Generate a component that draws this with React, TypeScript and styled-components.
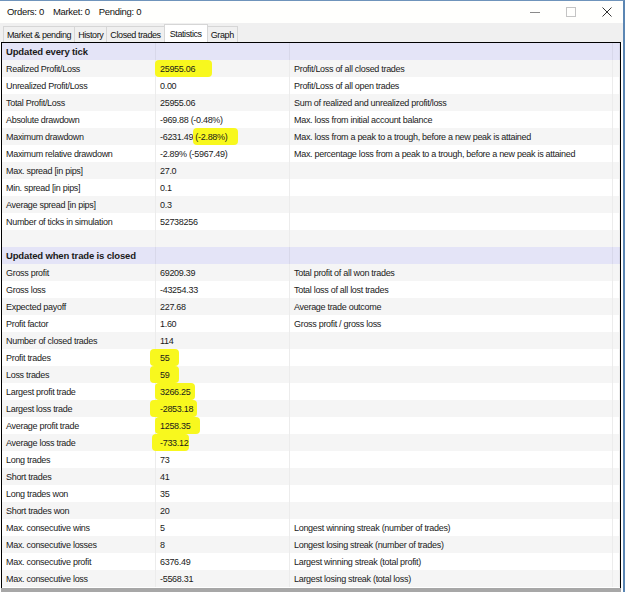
import React from "react";
import styled, { createGlobalStyle } from "styled-components";

const GlobalStyle = createGlobalStyle`
  html, body { margin: 0; padding: 0; background: #ffffff; }
  body { font-family: "Liberation Sans", Arial, sans-serif; }
  * { box-sizing: border-box; }
`;

const Window = styled.div`
  width: 625px;
  height: 592px;
  display: flex;
  flex-direction: column;
  border-top: 1px solid #6f94bb;
  border-right: 2px solid #5b86b3;
  background: #ffffff;
  overflow: hidden;
  font-size: 9px;
  letter-spacing: -0.3px;
  color: #1a1a1a;
`;

const TitleBar = styled.div`
  height: 22px;
  display: flex;
  align-items: center;
  justify-content: space-between;
  padding-left: 7px;
  background: #fffffd;
`;

const Counters = styled.div`
  display: flex;
  gap: 9px;
  font-size: 9.5px;
  color: #111;
  margin-top: -1px;
`;

const Controls = styled.div`
  display: flex;
  align-items: center;
  gap: 26px;
  padding-right: 11px;
`;

const CtrlIcon = styled.svg`
  width: 10px;
  height: 10px;
  display: block;
`;

const TabStrip = styled.div`
  height: 19px;
  display: flex;
  align-items: flex-end;
  padding-left: 4px;
  background: #f0f0f0;
`;

const Tab = styled.div<{ $active?: boolean }>`
  height: ${(p) => (p.$active ? "18px" : "16px")};
  display: flex;
  align-items: center;
  padding: 0 ${(p) => (p.$active ? "5px" : "3px")};
  margin-left: -1px;
  border: 1px solid #d6d6d6;
  border-bottom: none;
  background: ${(p) => (p.$active ? "#ffffff" : "#f0f0f0")};
  color: #111;
  font-size: 9px;
  letter-spacing: -0.4px;
  position: relative;
  z-index: ${(p) => (p.$active ? 1 : 0)};
`;

const Table = styled.div`
  flex: 1;
  margin: 0 2px 0 1px;
  border: 1px solid #000000;
  border-bottom: none;
  display: flex;
  flex-direction: column;
  overflow: hidden;
`;

const Row = styled.div<{ $tone: "head" | "white" | "gray" }>`
  height: 17px;
  display: grid;
  grid-template-columns: 154px 134px 323px 1fr;
  align-items: stretch;
  background: ${(p) =>
    p.$tone === "head" ? "#e4e4f7" : p.$tone === "gray" ? "#f5f5f5" : "#ffffff"};
  font-weight: ${(p) => (p.$tone === "head" ? 700 : 400)};
`;

const Cell = styled.div<{ $head?: boolean }>`
  display: flex;
  align-items: center;
  padding-left: 4px;
  border-right: 1px solid ${(p) => (p.$head ? "#d8d8ea" : "#ececec")};
  white-space: pre;
  overflow: visible;
  font-size: ${(p) => (p.$head ? "9.5px" : "9px")};
  letter-spacing: ${(p) => (p.$head ? "-0.15px" : "-0.3px")};
`;

const Mark = styled.span<{ $l: number; $r: number }>`
  background: #f8f81e;
  border-radius: 4px;
  padding: 3.5px ${(p) => p.$r}px 3.5px ${(p) => p.$l}px;
  margin-left: -${(p) => p.$l}px;
`;

const BottomEdge = styled.div`
  height: 4px;
  background: #a7a7a7;
  margin: 0 2px 0 1px;
`;

type Hl = { l: number; r: number; lead?: string };
type Item = { label: string; value: string; desc?: string; hl?: Hl };

const section1: Item[] = [
  { label: "Realized Profit/Loss", value: "25955.06", desc: "Profit/Loss of all closed trades", hl: { l: 5, r: 17 } },
  { label: "Unrealized Profit/Loss", value: "0.00", desc: "Profit/Loss of all open trades" },
  { label: "Total Profit/Loss", value: "25955.06", desc: "Sum of realized and unrealized profit/loss" },
  { label: "Absolute drawdown", value: "-969.88 (-0.48%)", desc: "Max. loss from initial account balance" },
  { label: "Maximum drawdown", value: "\u00a0(-2.88%)", desc: "Max. loss from a peak to a trough, before a new peak is attained", hl: { l: 0, r: 11, lead: "-6231.49" } },
  { label: "Maximum relative drawdown", value: "-2.89% (-5967.49)", desc: "Max. percentage loss from a peak to a trough, before a new peak is attained" },
  { label: "Max. spread [in pips]", value: "27.0" },
  { label: "Min. spread [in pips]", value: "0.1" },
  { label: "Average spread [in pips]", value: "0.3" },
  { label: "Number of ticks in simulation", value: "52738256" },
  { label: "", value: "" },
];

const section2: Item[] = [
  { label: "Gross profit", value: "69209.39", desc: "Total profit of all won trades" },
  { label: "Gross loss", value: "-43254.33", desc: "Total loss of all lost trades" },
  { label: "Expected payoff", value: "227.68", desc: "Average trade outcome" },
  { label: "Profit factor", value: "1.60", desc: "Gross profit / gross loss" },
  { label: "Number of closed trades", value: "114" },
  { label: "Profit trades", value: "55", hl: { l: 10, r: 10 } },
  { label: "Loss trades", value: "59", hl: { l: 10, r: 10 } },
  { label: "Largest profit trade", value: "3266.25", hl: { l: 5, r: 5 } },
  { label: "Largest loss trade", value: "-2853.18", hl: { l: 10, r: 4 } },
  { label: "Average profit trade", value: "1258.35", hl: { l: 5, r: 10 } },
  { label: "Average loss trade", value: "-733.12", hl: { l: 8, r: 1 } },
  { label: "Long trades", value: "73" },
  { label: "Short trades", value: "41" },
  { label: "Long trades won", value: "35" },
  { label: "Short trades won", value: "20" },
  { label: "Max. consecutive wins", value: "5", desc: "Longest winning streak (number of trades)" },
  { label: "Max. consecutive losses", value: "8", desc: "Longest losing streak (number of trades)" },
  { label: "Max. consecutive profit", value: "6376.49", desc: "Largest winning streak (total profit)" },
  { label: "Max. consecutive loss", value: "-5568.31", desc: "Largest losing streak (total loss)" },
];

type RowSpec = { head?: string; item?: Item };

const rows: RowSpec[] = [
  { head: "Updated every tick" },
  ...section1.map((item) => ({ item })),
  { head: "Updated when trade is closed" },
  ...section2.map((item) => ({ item })),
];

const ValueContent: React.FC<{ item: Item }> = ({ item }) => {
  if (!item.hl) return <>{item.value}</>;
  return (
    <span>
      {item.hl.lead}
      <Mark $l={item.hl.l} $r={item.hl.r}>
        {item.value}
      </Mark>
    </span>
  );
};

export default function App() {
  return (
    <>
      <GlobalStyle />
      <Window>
        <TitleBar>
          <Counters>
            <span>Orders: 0</span>
            <span>Market: 0</span>
            <span>Pending: 0</span>
          </Counters>
          <Controls>
            <CtrlIcon viewBox="0 0 10 10">
              <line x1="0" y1="5.5" x2="10" y2="5.5" stroke="#8a8a8a" strokeWidth="1" />
            </CtrlIcon>
            <CtrlIcon viewBox="0 0 10 10">
              <rect x="0.5" y="0.5" width="9" height="9" fill="none" stroke="#c4c4c4" strokeWidth="1" />
            </CtrlIcon>
            <CtrlIcon viewBox="0 0 10 10">
              <path d="M0.5 0.5 L9.5 9.5 M9.5 0.5 L0.5 9.5" stroke="#333" strokeWidth="1" />
            </CtrlIcon>
          </Controls>
        </TitleBar>
        <TabStrip>
          <Tab>Market &amp; pending</Tab>
          <Tab>History</Tab>
          <Tab>Closed trades</Tab>
          <Tab $active>Statistics</Tab>
          <Tab>Graph</Tab>
        </TabStrip>
        <Table>
          {rows.map((r, i) =>
            r.head ? (
              <Row key={i} $tone="head">
                <Cell $head>{r.head}</Cell>
                <Cell $head />
                <Cell $head />
                <Cell $head />
              </Row>
            ) : (
              <Row key={i} $tone={i % 2 === 1 ? "gray" : "white"}>
                <Cell>{r.item!.label}</Cell>
                <Cell>
                  <ValueContent item={r.item!} />
                </Cell>
                <Cell>{r.item!.desc ?? ""}</Cell>
                <Cell />
              </Row>
            )
          )}
        </Table>
        <BottomEdge />
      </Window>
    </>
  );
}
